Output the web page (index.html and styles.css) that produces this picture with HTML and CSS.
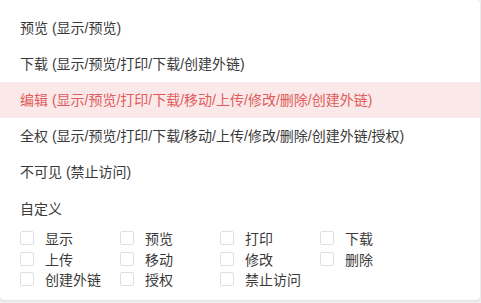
FILE: index.html
```html
<!DOCTYPE html>
<html lang="zh-CN">
<head>
<meta charset="utf-8">
<link rel="stylesheet" href="styles.css">
</head>
<body>
<div class="panel">
  <ul class="options">
    <li class="option">预览 (显示/预览)</li>
    <li class="option">下载 (显示/预览/打印/下载/创建外链)</li>
    <li class="option active">编辑 (显示/预览/打印/下载/移动/上传/修改/删除/创建外链)</li>
    <li class="option">全权 (显示/预览/打印/下载/移动/上传/修改/删除/创建外链/授权)</li>
    <li class="option">不可见 (禁止访问)</li>
  </ul>
  <div class="custom">
    <div class="custom-title">自定义</div>
    <div class="checks">
      <label class="check"><span class="box"></span><span>显示</span></label>
      <label class="check"><span class="box"></span><span>预览</span></label>
      <label class="check"><span class="box"></span><span>打印</span></label>
      <label class="check"><span class="box"></span><span>下载</span></label>
      <label class="check"><span class="box"></span><span>上传</span></label>
      <label class="check"><span class="box"></span><span>移动</span></label>
      <label class="check"><span class="box"></span><span>修改</span></label>
      <label class="check"><span class="box"></span><span>删除</span></label>
      <label class="check"><span class="box"></span><span>创建外链</span></label>
      <label class="check"><span class="box"></span><span>授权</span></label>
      <label class="check"><span class="box"></span><span>禁止访问</span></label>
    </div>
  </div>
</div>
</body>
</html>
```
FILE: styles.css
```css
html, body {
  margin: 0;
  padding: 0;
}
body {
  background: #eeeeef;
  width: 481px;
  height: 303px;
  overflow: hidden;
  font-family: "Liberation Sans", "Noto Sans CJK SC", sans-serif;
  font-size: 14px;
  color: #3a3a3a;
}
.panel {
  width: 480px;
  height: 300px;
  background: #fff;
  border-radius: 0 4px 4px 4px;
  box-shadow: 0 1px 2px rgba(0,0,0,0.06);
  padding-top: 10px;
  box-sizing: border-box;
}
.options {
  list-style: none;
  margin: 0;
  padding: 0;
}
.option {
  height: 36px;
  line-height: 36px;
  padding-left: 20px;
  white-space: nowrap;
}
.option.active {
  background: #fbe9e9;
  color: #e05b5b;
}
.custom {
  padding-left: 20px;
}
.custom-title {
  height: 38px;
  line-height: 38px;
}
.checks {
  display: grid;
  grid-template-columns: repeat(4, 100px);
  grid-auto-rows: 20.5px;
}
.check {
  display: flex;
  align-items: center;
  gap: 11px;
  white-space: nowrap;
}
.box {
  width: 12px;
  height: 12px;
  border: 1px solid #dcdfe6;
  border-radius: 2px;
  background: #fff;
  flex: none;
}
```
